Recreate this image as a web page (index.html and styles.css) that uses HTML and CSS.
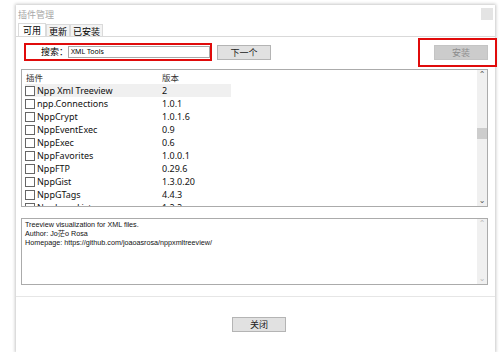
FILE: index.html
```html
<!DOCTYPE html>
<html lang="zh-CN">
<head>
	<meta charset="UTF-8">
	<title>插件管理</title>
	<link rel="stylesheet" href="styles.css">
</head>
<body>
	<div class="window">
		<div class="titlebar">
			<span class="title">插件管理</span>
			<span class="close"></span>
		</div>
		<div class="tabs">
			<span class="tab on">可用</span>
			<span class="tab">更新</span>
			<span class="tab">已安装</span>
		</div>
		<div class="toolbar">
			<div class="search mark">
				<label>搜索：</label>
				<div class="input">XML Tools</div>
			</div>
			<button class="btn next">下一个</button>
			<div class="install-wrap mark">
				<button class="btn off">安装</button>
			</div>
		</div>
		<div class="list">
			<div class="rows">
				<div class="row head"><span class="c1">插件</span><span class="c2">版本</span></div>
				<div class="row sel"><span class="c1"><i class="box"></i>Npp Xml Treeview</span><span class="c2">2</span></div>
				<div class="row"><span class="c1"><i class="box"></i>npp.Connections</span><span class="c2">1.0.1</span></div>
				<div class="row"><span class="c1"><i class="box"></i>NppCrypt</span><span class="c2">1.0.1.6</span></div>
				<div class="row"><span class="c1"><i class="box"></i>NppEventExec</span><span class="c2">0.9</span></div>
				<div class="row"><span class="c1"><i class="box"></i>NppExec</span><span class="c2">0.6</span></div>
				<div class="row"><span class="c1"><i class="box"></i>NppFavorites</span><span class="c2">1.0.0.1</span></div>
				<div class="row"><span class="c1"><i class="box"></i>NppFTP</span><span class="c2">0.29.6</span></div>
				<div class="row"><span class="c1"><i class="box"></i>NppGist</span><span class="c2">1.3.0.20</span></div>
				<div class="row"><span class="c1"><i class="box"></i>NppGTags</span><span class="c2">4.4.3</span></div>
				<div class="row"><span class="c1"><i class="box"></i>NppJumpList</span><span class="c2">1.2.2</span></div>
			</div>
			<div class="scroll">
				<span class="arrow">&#8963;</span>
				<span class="thumb"></span>
				<span class="arrow">&#8964;</span>
			</div>
		</div>
		<div class="desc">
			<div class="text">
				Treeview visualization for XML files.<br>
				Author: Jo茫o Rosa<br>
				Homepage: https://github.com/joaoasrosa/nppxmltreeview/
			</div>
			<div class="scroll light">
				<span class="arrow">&#8963;</span>
				<span class="arrow">&#8964;</span>
			</div>
		</div>
		<div class="footer">
			<button class="btn">关闭</button>
		</div>
	</div>
</body>
</html>
```

FILE: styles.css
```css
*{margin: 0;padding: 0;box-sizing: border-box;}
body{
	background: #fff;
	font-family: "Noto Sans", "Noto Sans CJK SC", sans-serif;
	color: #000;
}
.window{
	width: 479px;
	height: 347px;
	margin: 5px 0 0 16px;
	background: #fff;
	box-shadow: 0 0 3px 1px rgba(0,0,0,.22);
	display: flex;
	flex-direction: column;
}
.titlebar{
	height: 18px;
	display: flex;
	justify-content: space-between;
	padding: 3px 2px 0 2px;
}
.title{
	font: 9px/13px "Noto Sans CJK SC", sans-serif;
	color: #a8a8a8;
}
.close{
	width: 12px;
	height: 12px;
	background: #e4e4e4;
}
.tabs{
	height: 14px;
	display: flex;
	padding-left: 2px;
	border-bottom: 1px solid #d9d9d9;
}
.tab{
	font: 9px/13px "Noto Sans CJK SC", sans-serif;
	padding: 0 2px;
	background: #f3f3f3;
	border: 1px solid #dadada;
	border-bottom: none;
	margin-top: 1px;
}
.tab.on{
	background: #fff;
	margin-top: 0;
	padding: 0 4px;
}
.toolbar{
	height: 30px;
	display: flex;
	align-items: center;
	padding-left: 8px;
}
.mark{
	border: 2px solid #e00b0b;
}
.search{
	width: 188px;
	height: 18px;
	display: flex;
	align-items: center;
	margin-top: -1px;
}
.search label{
	width: 42px;
	text-align: right;
	font: 9px/12px "Noto Sans CJK SC", sans-serif;
}
.input{
	width: 142px;
	height: 12px;
	border: 1px solid #a8a8a8;
	font: 7px/10px "Noto Sans", sans-serif;
	padding-left: 2px;
}
.btn{
	width: 54px;
	height: 15px;
	background: #e1e1e1;
	border: 1px solid #b4b4b4;
	font: 9px/13px "Noto Sans CJK SC", sans-serif;
	color: #222;
}
.next{
	margin-left: 5px;
}
.install-wrap{
	margin-left: auto;
	margin-right: -2px;
	width: 79px;
	height: 29px;
	display: flex;
	align-items: center;
	padding-left: 14px;
}
.btn.off{
	background: #cccccc;
	border-color: #c4c4c4;
	color: #8d8d8d;
}
.list{
	margin: 2px 0 0 5px;
	width: 467px;
	height: 138px;
	border: 1px solid #ababab;
	display: flex;
	overflow: hidden;
}
.rows{
	flex: 1;
	padding-left: 3px;
}
.row{
	height: 13px;
	width: 206px;
	display: flex;
	align-items: center;
	font: 9px/13px "Noto Sans", sans-serif;
	color: #111;
}
.row.head{
	height: 14px;
	font: 8.5px/14px "Noto Sans CJK SC", sans-serif;
	color: #333;
}
.row.sel{
	background: #f0f0f0;
}
.c1{
	width: 137px;
	display: flex;
	align-items: center;
}
.c1 .box{
	width: 10px;
	height: 10px;
	border: 1px solid #666;
	background: #fff;
	margin-right: 2px;
}
.head .c1{
	padding-left: 1px;
}
.scroll{
	width: 10px;
	background: #f0f0f0;
	display: flex;
	flex-direction: column;
	align-items: center;
	justify-content: space-between;
	font: 8px/10px "DejaVu Sans", sans-serif;
	color: #555;
}
.scroll .arrow{
	height: 10px;
}
.scroll .thumb{
	width: 10px;
	height: 11px;
	background: #cdcdcd;
	margin-top: 48px;
	margin-bottom: auto;
}
.scroll.light{
	color: #bbb;
}
.desc{
	margin: 11px 0 0 5px;
	width: 467px;
	height: 67px;
	border: 1px solid #ababab;
	display: flex;
}
.desc .text{
	flex: 1;
	padding: 1px 0 0 3px;
	font: 7.2px/9px "Liberation Sans", "Noto Sans CJK SC", sans-serif;
	color: #111;
}
.footer{
	margin-top: 11px;
	flex: 1;
	border-top: 1px solid #e6e6e6;
	display: flex;
	justify-content: center;
	align-items: center;
	padding-left: 7px;
	padding-bottom: 1px;
}
```
